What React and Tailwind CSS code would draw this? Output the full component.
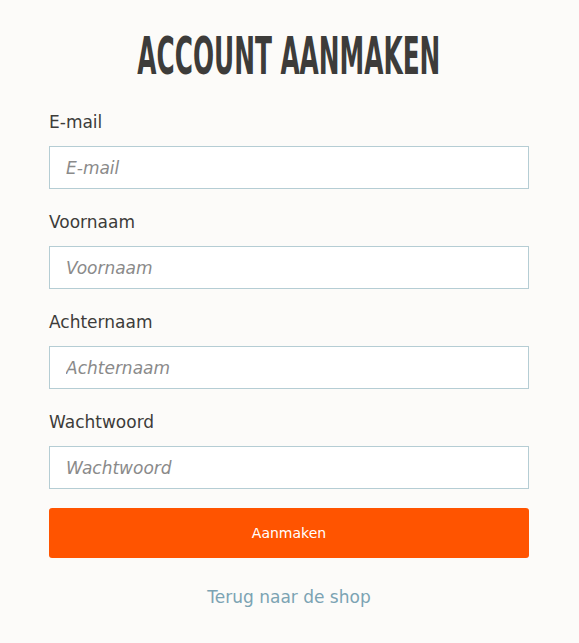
export default function App() {
  const fields = ["E-mail", "Voornaam", "Achternaam", "Wachtwoord"];
  return (
    <div className="min-h-[643px] w-full bg-[#fcfbf9] font-['DejaVu_Sans',sans-serif]">
      <div className="ml-[49px] w-[480px] pt-[30px]">
        <h1 className="flex justify-center text-[#3d3c3a]">
          <span className="inline-block origin-center scale-x-[0.53] whitespace-nowrap font-['DejaVu_Sans_Condensed','DejaVu_Sans',sans-serif] text-[52px] font-bold leading-[52px] tracking-[0px]">
            ACCOUNT AANMAKEN
          </span>
        </h1>
        <form className="mt-[29px] flex flex-col">
          {fields.map((f, i) => (
            <div key={f} className={i === 0 ? "" : "mt-[22px]"}>
              <label className="block text-[17px] leading-[22px] text-[#3d3c3a]">{f}</label>
              <input
                placeholder={f}
                className="mt-[13px] block h-[43px] w-full border border-[#b5cdd4] bg-white px-[16px] text-[17px] italic text-[#555] placeholder:text-[#8a8a8a] outline-none"
              />
            </div>
          ))}
          <button
            type="button"
            className="mt-[19px] h-[50px] w-full rounded-[3px] bg-[#ff5400] text-[14px] text-white"
          >
            Aanmaken
          </button>
        </form>
        <div className="mt-[27px] text-center text-[17px] text-[#7ba3b3]">Terug naar de shop</div>
      </div>
    </div>
  );
}
